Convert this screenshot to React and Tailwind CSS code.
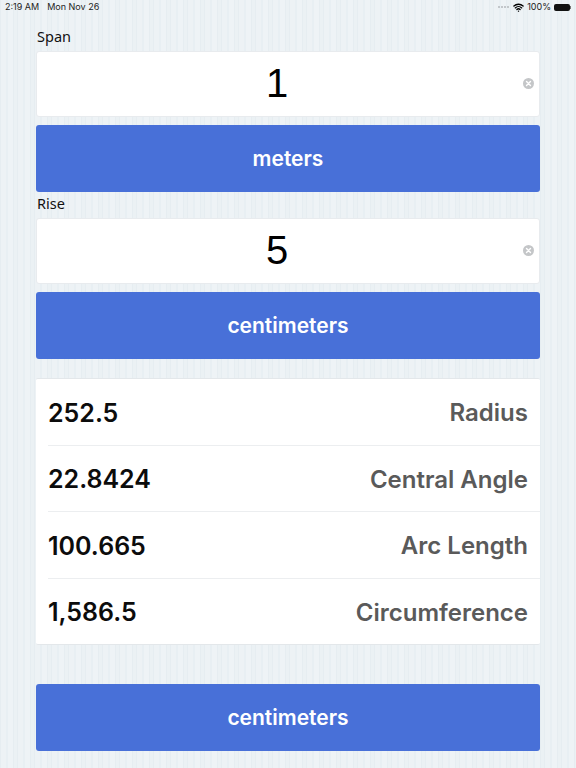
import React from 'react';
import { Wifi } from 'lucide-react';

const results = [
  { value: '252.5', label: 'Radius' },
  { value: '22.8424', label: 'Central Angle' },
  { value: '100.665', label: 'Arc Length' },
  { value: '1,586.5', label: 'Circumference' },
];

const ClearIcon = () => (
  <svg viewBox="0 0 10 10" className="absolute right-[5px] top-[26px] w-[11px] h-[11px]">
    <circle cx="5" cy="5" r="5" fill="#c4c6c8" />
    <path d="M3.2 3.2 6.8 6.8M6.8 3.2 3.2 6.8" stroke="#fff" strokeWidth="1.3" strokeLinecap="round" />
  </svg>
);

const Field = ({ label, value, className }) => (
  <div>
    <div className={`${className} pl-[1px] text-[14.5px] leading-[20px] text-[#111] font-['Noto_Sans',sans-serif]`}>{label}</div>
    <div className="relative h-[66px] bg-white rounded-[3px] border border-[#e8ebee] flex items-center justify-center pr-[22px] pb-[2px]">
      <span className="text-[40px] leading-none text-black font-['Liberation_Sans',sans-serif]">{value}</span>
      <ClearIcon />
    </div>
  </div>
);

const UnitButton = ({ children }) => (
  <div className="h-[67px] bg-[#4870d8] rounded-[3px] flex items-center justify-center text-white text-[21px] font-semibold font-['Inter',sans-serif]">
    {children}
  </div>
);

const App = () => {
  return (
    <div className="relative w-[576px] h-[768px] overflow-hidden bg-[#e9f0f4] bg-[repeating-linear-gradient(90deg,#e6edf1_0px,#e6edf1_1px,#edf2f5_1px,#edf2f5_6px,#e8eff3_6px,#e8eff3_8px,#eef3f6_8px,#eef3f6_13px,#e6edf1_13px,#e6edf1_14px,#ebf1f4_14px,#ebf1f4_17px)] font-['Inter',sans-serif]">
      {/* status bar */}
      <div className="h-[14px] px-[5px] flex items-center justify-between text-[9px] text-[#222]">
        <div className="flex gap-[8px]">
          <span>2:19 AM</span>
          <span>Mon Nov 26</span>
        </div>
        <div className="flex items-center gap-[3px]">
          <div className="flex gap-[1px] mr-[1px]">
            <span className="w-[2px] h-[2px] rounded-full bg-[#b5b9bc]" />
            <span className="w-[2px] h-[2px] rounded-full bg-[#b5b9bc]" />
            <span className="w-[2px] h-[2px] rounded-full bg-[#b5b9bc]" />
            <span className="w-[2px] h-[2px] rounded-full bg-[#b5b9bc]" />
          </div>
          <Wifi size={11} strokeWidth={3} className="text-black" />
          <span>100%</span>
          <div className="flex items-center">
            <div className="w-[16px] h-[7px] rounded-[2px] bg-[#111]" />
            <div className="w-[1px] h-[3px] bg-[#777]" />
          </div>
        </div>
      </div>

      <div className="px-9">
        <Field label="Span" value="1" className="h-[37px] pt-[12px]" />
        <div className="mt-[8px]">
          <UnitButton>meters</UnitButton>
        </div>
        <Field label="Rise" value="5" className="h-[26px] pt-[1px]" />
        <div className="mt-[8px]">
          <UnitButton>centimeters</UnitButton>
        </div>

        {/* results */}
        <div className="mt-[19px] bg-white rounded-[2px] border-y border-[#e3e7ea] h-[267px] flex flex-col pl-[12px]">
          {results.map((r, i) => (
            <div
              key={r.label}
              className={`flex-1 flex items-center justify-between pr-[12px] pt-[3px] ${i < 3 ? 'border-b border-[#eceef0]' : ''}`}
            >
              <span className="text-[25px] font-semibold text-[#0c0c0c]">{r.value}</span>
              <span className="text-[24px] font-semibold text-[#5a5a5a]">{r.label}</span>
            </div>
          ))}
        </div>

        <div className="mt-[39px]">
          <UnitButton>centimeters</UnitButton>
        </div>
      </div>
    </div>
  );
};

export default App;
